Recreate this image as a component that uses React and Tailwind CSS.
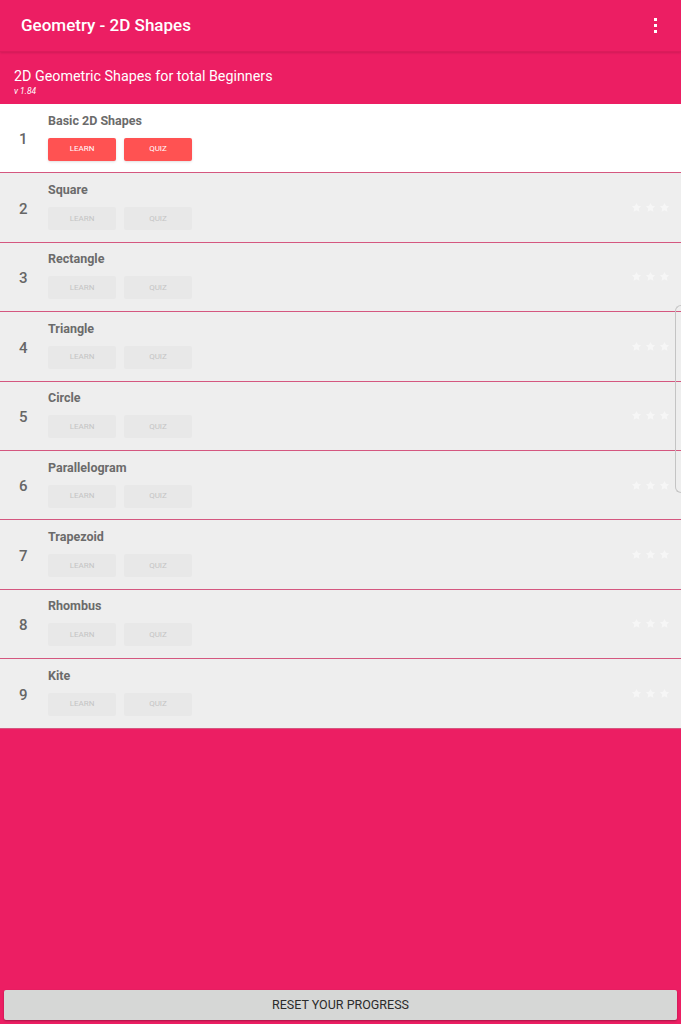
import React from 'react';

const lessons = [
    { n: 1, title: 'Basic 2D Shapes', active: true },
    { n: 2, title: 'Square' },
    { n: 3, title: 'Rectangle' },
    { n: 4, title: 'Triangle' },
    { n: 5, title: 'Circle' },
    { n: 6, title: 'Parallelogram' },
    { n: 7, title: 'Trapezoid' },
    { n: 8, title: 'Rhombus' },
    { n: 9, title: 'Kite' },
];

function Star() {
    return (
        <svg width="11" height="11" viewBox="0 0 24 24" className="fill-[#f6f6f6]">
            <path d="M12 2l3.1 6.3 6.9 1-5 4.9 1.2 6.8L12 17.8 5.8 21l1.2-6.8-5-4.9 6.9-1z" />
        </svg>
    );
}

function LessonRow({ n, title, active }) {
    const btn = active
        ? 'bg-[#ff5252] text-white rounded-[2px] shadow-sm'
        : 'bg-[#e8e8e8] text-[#c4c4c4] rounded-[2px]';
    return (
        <div className={`flex items-center h-[69.4px] border-b border-[#d4577f] ${active ? 'bg-white' : 'bg-[#eeeeee]'}`}>
            {/* Número */}
            <div className="w-[48px] pl-[19px] pt-[3px] text-[15px] font-medium text-[#666666]">{n}</div>
            {/* Título y botones */}
            <div className="flex-1 flex flex-col">
                <div className="text-[12.5px] font-bold text-[#6b6b6b] leading-[15px] -mt-[3px]">{title}</div>
                <div className="flex gap-[8px] mt-[10px]">
                    <div className={`w-[68px] h-[23px] flex items-center justify-center text-[8px] ${btn}`}>LEARN</div>
                    <div className={`w-[68px] h-[23px] flex items-center justify-center text-[8px] ${btn}`}>QUIZ</div>
                </div>
            </div>
            {/* Estrellas */}
            {!active && (
                <div className="flex gap-[3px] pr-[11px]">
                    <Star />
                    <Star />
                    <Star />
                </div>
            )}
        </div>
    );
}

export default function App() {
    return (
        <div className="relative w-[681px] h-[1024px] bg-[#ec1e63] flex flex-col overflow-hidden" style={{ fontFamily: 'Roboto, "Noto Sans", sans-serif' }}>
            {/* Barra superior */}
            <div className="h-[52px] flex items-center justify-between pl-[21px] pr-[24px] border-b border-[#dc1b5b] shadow-[0_1px_2px_rgba(0,0,0,0.12)]">
                <div className="text-[17px] font-medium text-white pt-[1px]">Geometry - 2D Shapes</div>
                <div className="flex flex-col gap-[3px]">
                    <span className="w-[3px] h-[3px] bg-white"></span>
                    <span className="w-[3px] h-[3px] bg-white"></span>
                    <span className="w-[3px] h-[3px] bg-white"></span>
                </div>
            </div>
            {/* Subtítulo */}
            <div className="h-[52px] pl-[14px] pt-[15px]">
                <div className="text-[14.3px] text-white leading-[18px]">2D Geometric Shapes for total Beginners</div>
                <div className="text-[8.5px] italic text-white leading-[12px]">v 1.84</div>
            </div>
            {/* Lista */}
            <div className="flex flex-col">
                {lessons.map(l => (
                    <LessonRow key={l.n} {...l} />
                ))}
            </div>
            <div className="flex-1"></div>
            {/* Botón reset */}
            <div className="px-[4px] pb-[4px]">
                <div className="h-[30px] bg-[#d6d7d6] rounded-[2px] shadow-[0_1px_2px_rgba(0,0,0,0.3)] flex items-center justify-center text-[12.5px] text-[#2b2b2b]">
                    RESET YOUR PROGRESS
                </div>
            </div>
            {/* Asa del panel lateral */}
            <div className="absolute right-0 top-[305px] w-[6px] h-[188px] border border-r-0 border-[#c4c4c4] rounded-l-[6px]"></div>
        </div>
    );
}
